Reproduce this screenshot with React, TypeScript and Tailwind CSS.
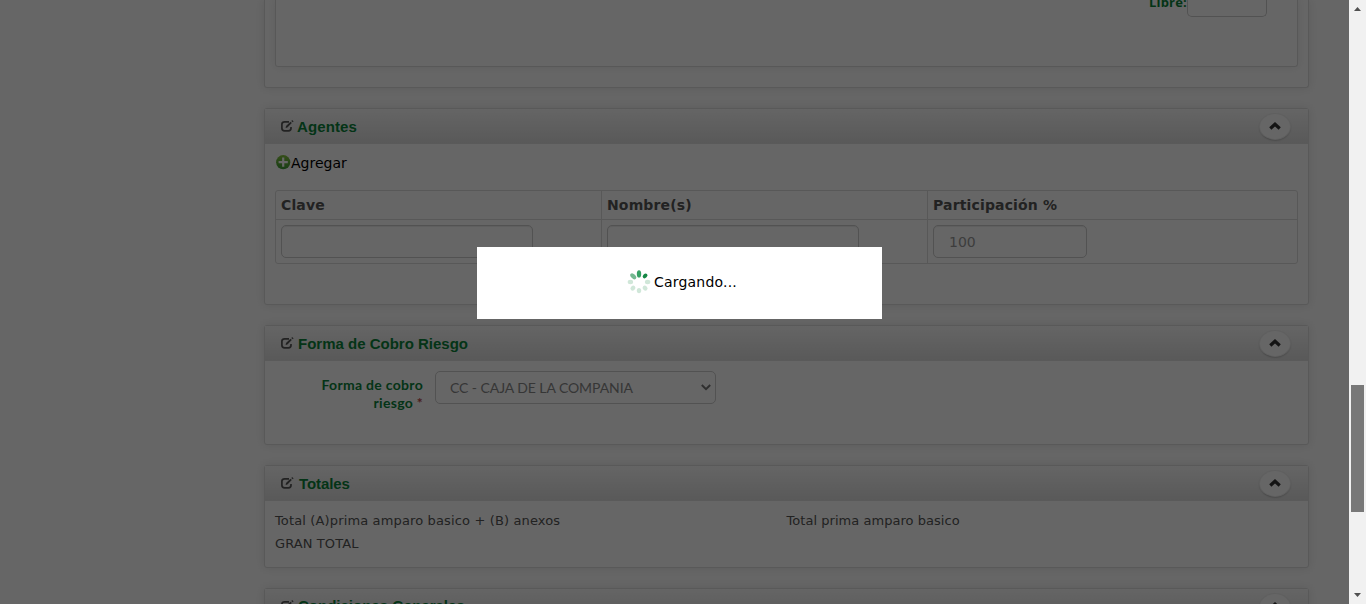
import type { ReactNode } from "react";

function EditIcon() {
  return (
    <svg width="13" height="12" viewBox="0 0 13 12" className="-mt-[2px] shrink-0" fill="none" stroke="#555" strokeWidth="1.7">
      <path d="M8 1.8H3.6Q.9 1.8 .9 4.2V8.2Q.9 10.8 3.6 10.8H7.4Q10 10.8 10 8.2V7" />
      <path d="M4.6 8L5 6 9.5 1.7 10.8 3 6.4 7.4Z" fill="#555" stroke="none" />
      <path d="M10.3.9L11.2 0 12.6 1.4 11.7 2.3Z" fill="#555" stroke="none" />
    </svg>
  );
}

function CollapseButton() {
  return (
    <button className="mt-[5px] flex h-[25px] w-[30px] items-center justify-center rounded-[50%] bg-[#fefefe] pr-px pb-px shadow-[0_0_0_1px_#eee,0_1px_2px_rgba(0,0,0,0.5)]">
      <svg width="12" height="8" viewBox="0 0 12 8" fill="none" stroke="#333" strokeWidth="3.2">
        <path d="M1.3 6.5L6 2.2 10.7 6.5" />
      </svg>
    </button>
  );
}

function Panel({ title, className, titleClass = "mt-px ml-1", children }: { title: string; className: string; titleClass?: string; children?: ReactNode }) {
  return (
    <section className={`mb-5 shrink-0 rounded-[3px] border border-[#dedede] bg-white shadow-[0_0_10px_rgba(189,189,189,0.4)] ${className}`}>
      <header className="flex h-[35px] items-start justify-between border-b border-[#e0e0e0] bg-linear-to-b from-[#fcfcfc] to-[#dfdfdf] pr-[18px] pl-4">
        <h2 className="flex h-[36px] items-center font-['Liberation_Sans',sans-serif] text-[15px] font-bold text-[#0a833a]">
          <EditIcon />
          <span className={titleClass}>{title}</span>
        </h2>
        <CollapseButton />
      </header>
      {children}
    </section>
  );
}

const cell = "border-r border-[#dddddd] px-[5px] last:border-r-0";
const input = "h-[33px] rounded-[5px] border border-[#cccccc] shadow-[inset_0_1px_1px_rgba(0,0,0,0.075)]";

function Spinner() {
  const petals = [
    { angle: 0, color: "#35a063" },
    { angle: 45, color: "#148744" },
    { angle: 90, color: "#d0e7d9" },
    { angle: 135, color: "#d0e7d9" },
    { angle: 180, color: "#d0e7d9" },
    { angle: 225, color: "#d0e7d9" },
    { angle: 270, color: "#d0e7d9" },
    { angle: 315, color: "#75b991" },
  ];
  return (
    <svg width="24" height="24" viewBox="0 0 24 24">
      {petals.map((p) => (
        <ellipse
          key={p.angle}
          cx="12"
          cy={p.angle === 0 || p.angle === 315 ? 3.9 : 3.4}
          rx={p.angle === 45 ? 2 : 2.2}
          ry={p.angle === 0 || p.angle === 315 ? 3.6 : 2.7}
          fill={p.color}
          transform={`rotate(${p.angle} 12 12)`}
        />
      ))}
    </svg>
  );
}

export default function App() {
  return (
    <div className="relative flex h-[604px] w-[1366px] overflow-hidden bg-white font-['DejaVu_Sans',sans-serif]">
      <main className="flex h-[604px] w-[1349px] flex-col overflow-hidden pr-10 pl-[264px]">
        <section className="mb-5 h-[88px] shrink-0 rounded-b-[3px] border border-t-0 border-[#dedede] px-[10px] shadow-[0_0_10px_rgba(189,189,189,0.4)]">
          <div className="flex h-[67px] items-start justify-end rounded-b-[3px] border border-t-0 border-[#dddddd] pr-[30px] shadow-[0_0_8px_rgba(189,189,189,0.3)]">
            <label className="-mt-[7px] font-['Open_Sans',sans-serif] text-[13px] leading-[18px] font-bold tracking-[0.2px] text-[#0a833a]">Libre:</label>
            <div className="h-[17px] w-20 rounded-b-[5px] border border-t-0 border-[#cccccc]" />
          </div>
        </section>

        <Panel title="Agentes" className="h-[197px]" titleClass="mt-px ml-[3px] tracking-[0.1px]">
          <div className="flex h-[46px] items-start pt-[9px] pl-[11px]">
            <svg width="15" height="15" viewBox="0 0 15 15" className="mt-[2px]">
              <defs>
                <linearGradient id="add" x1="0" y1="0" x2="0" y2="1">
                  <stop stopColor="#86c440" />
                  <stop offset="1" stopColor="#3c9a36" />
                </linearGradient>
              </defs>
              <circle cx="7.2" cy="7.2" r="7.1" fill="url(#add)" />
              <path d="M7.2 2.6V11.8M2.6 7.2H11.8" stroke="#fff" strokeWidth="2.2" />
            </svg>
            <span className="text-[14px] leading-5 text-black">Agregar</span>
          </div>
          <div className="mx-[10px] h-[74px] rounded-[3px] border border-[#dddddd]">
            <div className="grid h-[29px] grid-cols-[326px_326px_1fr] border-b border-[#dddddd] text-[14px] leading-7 font-bold tracking-[0.15px] text-[#555]">
              <div className={cell}>Clave</div>
              <div className={cell}>Nombre(s)</div>
              <div className={cell}>Participación %</div>
            </div>
            <div className="grid h-[43px] grid-cols-[326px_326px_1fr]">
              <div className={`${cell} pt-[5px]`}><div className={`${input} w-[252px]`} /></div>
              <div className={`${cell} pt-[5px]`}><div className={`${input} w-[252px]`} /></div>
              <div className={`${cell} pt-[5px]`}>
                <div className={`${input} w-[154px] pl-[15px] text-[14px] leading-8 text-[#999]`}>100</div>
              </div>
            </div>
          </div>
        </Panel>

        <Panel title="Forma de Cobro Riesgo" className="h-[120px]">
          <div className="flex items-start pt-[10px] font-['Lato',sans-serif]">
            <label className="w-[158px] pt-[5px] text-right text-[14px] leading-[18px] font-bold tracking-[0.3px] text-[#0a833a]">
              Forma de cobro
              <br />
              riesgo <span className="text-[#b94a48]">*</span>
            </label>
            <div className="ml-3 flex h-[33px] w-[281px] items-center justify-between rounded-[5px] border border-[#cccccc] pr-1 pl-[14px] text-[14px] text-[#888]">
              <span className="tracking-[-0.08px]">CC - CAJA DE LA COMPANIA</span>
              <svg width="10" height="7" viewBox="0 0 10 7" fill="none" stroke="#777" strokeWidth="2">
                <path d="M.8 1L5 5.2 9.2 1" />
              </svg>
            </div>
          </div>
        </Panel>

        <Panel title="Totales" className="h-[103px]" titleClass="mt-px ml-[5px] tracking-[-0.1px]">
          <div className="grid grid-cols-2 px-[10px] pt-2 text-[13px] leading-[23px] text-[#555]">
            <span className="tracking-[0.14px]">Total (A)prima amparo basico + (B) anexos</span>
            <span className="tracking-[0.04px]">Total prima amparo basico</span>
            <span className="tracking-[0.1px]">GRAN TOTAL</span>
          </div>
        </Panel>

        <Panel title="Condiciones Generales" className="h-[120px]" titleClass="-mt-px ml-1" />
      </main>

      <aside className="flex w-[17px] flex-col items-center bg-[#f1f1f1]">
        <svg width="7" height="4" viewBox="0 0 7 4" className="mt-[7px]"><path d="M0 4L3.5 0 7 4Z" fill="#505050" /></svg>
        <div className="mt-[374px] h-[127px] w-[13px] bg-[#787878]" />
        <svg width="7" height="4" viewBox="0 0 7 4" className="mt-[81px]"><path d="M0 0H7L3.5 4Z" fill="#505050" /></svg>
      </aside>

      <div className="absolute inset-y-0 left-0 w-[1349px] bg-black/60" />
      <div role="dialog" className="absolute top-[247px] left-[477px] flex h-[72px] w-[405px] items-start bg-white pt-[23px] pl-[150px] text-[14px] text-black">
        <Spinner />
        <span className="ml-[3px] leading-6 tracking-[0.2px]">Cargando...</span>
      </div>
    </div>
  );
}
